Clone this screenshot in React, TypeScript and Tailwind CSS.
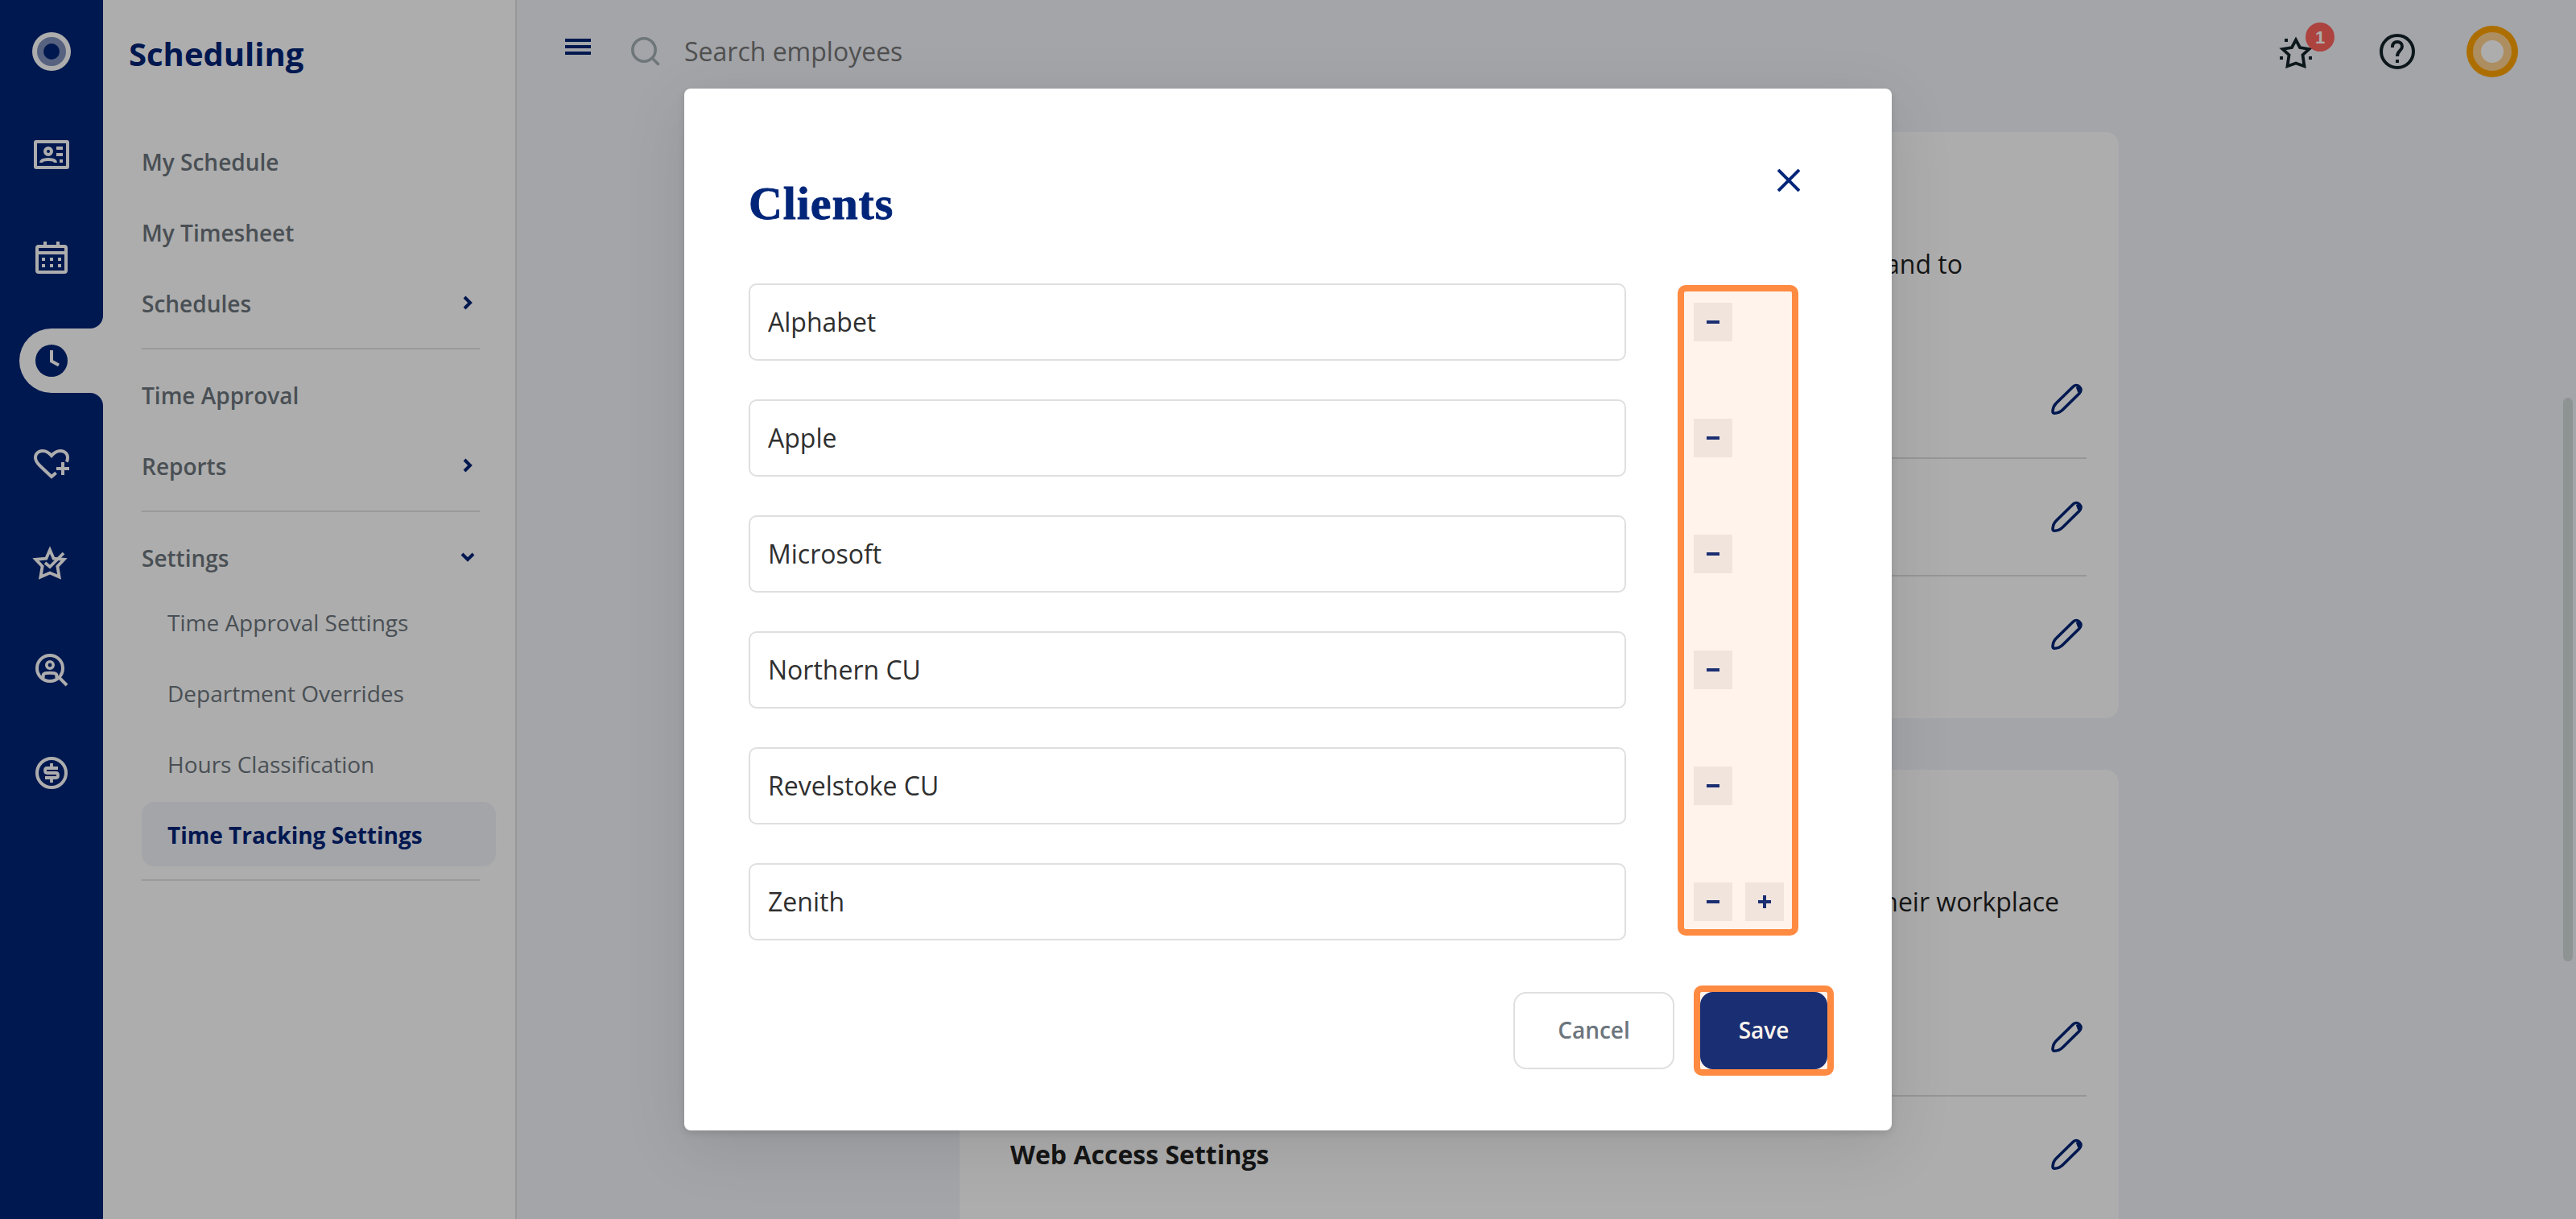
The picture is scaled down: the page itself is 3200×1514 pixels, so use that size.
import React from "react";

type IconProps = { children: React.ReactNode; className?: string };

const Icon = ({ children, className = "" }: IconProps) => (
  <svg viewBox="0 0 24 24" fill="none" stroke="currentColor" strokeWidth="2" className={`block h-12 w-12 shrink-0 ${className}`}>
    {children}
  </svg>
);

const IdCard = () => (
  <Icon>
    <rect x="2" y="4" width="20" height="16" rx="0.5" />
    <circle cx="10" cy="10" r="2" />
    <path d="M5.5 17c0-1.500 2-2 4.500-2s4.500 0.500 4.500 2" />
    <path d="M15 8h4M15 12h4M17 16h2" />
  </Icon>
);

const Calendar = () => (
  <Icon>
    <rect x="3" y="5" width="18" height="16" rx="1" />
    <path d="M3 9h18M8 2v3M16 2v3M6 13h2M11 13h2M16 13h2M6 17h2M11 17h2M16 17h2" />
  </Icon>
);

const Clock = () => (
  <Icon className="text-[#002477]">
    <circle cx="12" cy="12" r="10" fill="currentColor" stroke="none" />
    <path d="M12 5.500v6.800l4.500 2.400" stroke="#fff" />
  </Icon>
);

const HeartPlus = () => (
  <Icon>
    <path d="M14.800 17.600 12 20 5.200 13.600C3 11.500 2 10.200 2 8.200 2 5.800 3.800 4 6.500 4c2.200 0 3.800 1 5.500 3 1.700-2 3.300-3 5.500-3C20.200 4 22 5.800 22 8.200c0 1-.2 1.800-.6 2.600" />
    <path d="M19 11v8M15 15h8" />
  </Icon>
);

const StarCheck = () => (
  <Icon className="-ml-[2px]">
    <path d="M11.500 3.500 13.800 8.800 20.300 9.400 16.200 13.700 17.300 20.300 11.500 17.800 5.700 20.300 6.800 13.700 2.700 9.400 9.200 8.800Z" strokeWidth="1.900" />
    <path d="M8.500 11.500l3 2.500 8.500-8.500" strokeWidth="1.900" />
  </Icon>
);

const UserSearch = () => (
  <Icon>
    <circle cx="11" cy="11" r="8" />
    <circle cx="11" cy="9" r="2.100" strokeWidth="1.800" />
    <path d="M6.800 17v-1.500C7 14 8.800 13.900 11 13.900s4 .1 4.200 1.600V17M16.700 16.700 21.500 21.500" />
  </Icon>
);

const Dollar = () => (
  <Icon>
    <circle cx="12" cy="12" r="9" />
    <path d="M16 9H9.200C8.400 9 8 9.400 8 10.500S8.400 12 9.200 12h5.600c.8 0 1.200.4 1.200 1.500s-.4 1.500-1.200 1.500H8M12 6v3M12 15v3" strokeWidth="1.900" />
  </Icon>
);

const Pencil = () => (
  <svg viewBox="0 0 48 48" fill="none" stroke="#002477" strokeWidth="3.600" strokeLinejoin="round" className="block h-12 w-12">
    <path d="M31 8.500c2.300-2.600 5.600-2.600 8.100-.2s2.500 5.700 0 8.200L18.500 36.800c-3 2.900-6.500 4.400-10.200 4.400-1.800 0-2.400-.8-2.300-2.500.2-3.800 1.500-7.200 4.300-10Z" />
    <path d="M36.500 8.500l2.500 6.500" />
  </svg>
);

const Chevron = ({ down = false }: { down?: boolean }) => (
  <svg viewBox="0 0 24 24" fill="none" stroke="#002477" strokeWidth="4" className={down ? "block h-6 w-6 rotate-90" : "block h-6 w-6"}>
    <path d="M8 5l7 7-7 7" />
  </svg>
);

const railIcons = [IdCard, Calendar];
const railLower = [HeartPlus, StarCheck, UserSearch, Dollar];
const railLowerTops = ["mt-[64px]", "mt-[76px]", "mt-[84px]", "mt-[80px]"];

const Rail = () => (
  <nav className="flex h-full w-32 shrink-0 flex-col items-center bg-[#002477] pt-10 text-white">
    <div className="flex h-12 w-12 items-center justify-center rounded-full bg-white">
      <div className="h-9 w-9 rounded-full border-8 border-[#7f91bb] bg-[#002477]" />
    </div>
    {railIcons.map((I, i) => (
      <div key={i} className="mt-20">
        <I />
      </div>
    ))}
    <div className="mt-12 flex w-full flex-col">
      <div className="h-4 w-4 self-end bg-white">
        <div className="h-4 w-4 rounded-br-[16px] bg-[#002477]" />
      </div>
      <div className="ml-6 flex h-20 items-center rounded-l-full bg-white pl-4">
        <Clock />
      </div>
      <div className="h-4 w-4 self-end bg-white">
        <div className="h-4 w-4 rounded-tr-[16px] bg-[#002477]" />
      </div>
    </div>
    <div className="-mt-4 flex flex-col items-center">
      {railLower.map((I, i) => (
        <div key={i} className={railLowerTops[i]}>
          <I />
        </div>
      ))}
    </div>
  </nav>
);

const MenuItem = ({ label, arrow }: { label: string; arrow?: "right" | "down" }) => (
  <div className="flex h-20 w-[420px] items-center justify-between pr-[3px]">
    <span className="pt-[2px] text-[28px] font-semibold text-[#6c757d]">{label}</span>
    {arrow && <Chevron down={arrow === "down"} />}
  </div>
);

const Rule = () => <div className="my-4 h-[2px] w-[420px] bg-[#e3e3e3]" />;

const SubItem = ({ label, active = false }: { label: string; active?: boolean }) => (
  <div
    className={
      active
        ? "flex h-20 items-center rounded-2xl bg-[#f1f3f9] pt-[2px] pl-8 text-[28px] font-bold text-[#002477]"
        : "flex h-20 items-center pt-[2px] pl-8 text-[28px] text-[#6c757d]"
    }
  >
    {label}
  </div>
);

const SideMenu = () => (
  <aside className="h-full w-[514px] shrink-0 border-r-2 border-[#e0e0e0] bg-white pr-6 pl-12">
    <h1 className="-ml-4 flex h-[134px] items-center text-[40px] font-bold text-[#002477]">Scheduling</h1>
    <div className="mt-[26px] flex flex-col gap-2">
      <MenuItem label="My Schedule" />
      <MenuItem label="My Timesheet" />
      <MenuItem label="Schedules" arrow="right" />
    </div>
    <Rule />
    <div className="flex flex-col gap-2">
      <MenuItem label="Time Approval" />
      <MenuItem label="Reports" arrow="right" />
    </div>
    <Rule />
    <MenuItem label="Settings" arrow="down" />
    <div className="flex flex-col gap-2">
      <SubItem label="Time Approval Settings" />
      <SubItem label="Department Overrides" />
      <SubItem label="Hours Classification" />
      <SubItem label="Time Tracking Settings" active />
    </div>
    <Rule />
  </aside>
);

const TopBar = () => (
  <header className="flex h-32 items-center pr-[72px] pl-[60px]">
    <div className="-mt-3 flex flex-col gap-1">
      <div className="h-1 w-8 bg-[#002477]" />
      <div className="h-1 w-8 bg-[#002477]" />
      <div className="h-1 w-8 bg-[#002477]" />
    </div>
    <svg viewBox="0 0 36 36" fill="none" stroke="#a3afb4" strokeWidth="3.600" className="ml-[50px] block h-9 w-9">
      <circle cx="16" cy="16" r="14.200" />
      <path d="M25 25l9.500 9.500" />
    </svg>
    <span className="ml-[30px] text-[32px] text-[#777777]">Search employees</span>
    <div className="relative ml-auto">
      <svg viewBox="0 0 48 48" fill="none" stroke="#13222a" strokeWidth="3.800" className="block h-12 w-12">
        <path d="M24 9.500l5 9.500 11.500 2-8 7.200 2 14L24 38.500l-10.500 3.700 2-14-8-7.200L19 19Z" />
        <path d="M10 10h4M4 32h4M40 32h4" strokeWidth="4" />
      </svg>
      <div className="absolute top-[-12px] left-9 flex h-9 w-9 items-center justify-center rounded-full bg-[#ff645d] font-['Liberation_Sans',sans-serif] text-[22px] font-bold text-white">
        1
      </div>
    </div>
    <svg viewBox="0 0 48 48" fill="none" stroke="#13222a" strokeWidth="4" className="ml-[78px] block h-12 w-12">
      <circle cx="24" cy="24" r="20" />
      <path d="M18 19v-1c0-4 2.500-6 6-6s6 2.200 6 5.500c0 5.500-6 5.500-6 12.500M24 34v4" />
    </svg>
    <div className="ml-[62px] flex h-16 w-16 items-center justify-center rounded-full bg-[#ffa300]">
      <div className="h-12 w-12 rounded-full border-[10px] border-[#ffd28f] bg-white" />
    </div>
  </header>
);

const EditRow = ({ label = "", last = false }: { label?: string; last?: boolean }) => (
  <div
    className={
      last
        ? "flex h-36 items-center justify-between pl-[23px]"
        : "flex h-[146px] items-center justify-between border-b-2 border-[#dddddd] pl-[23px]"
    }
  >
    <span className="text-[32px] font-bold text-[#1f1f1f]">{label}</span>
    <Pencil />
  </div>
);

const MainArea = () => (
  <main className="h-full flex-1 overflow-hidden bg-[#f1f3f9]">
    <TopBar />
    <div className="mt-9 ml-[550px] flex w-[1440px] flex-col gap-16">
      <section className="h-[728px] rounded-2xl bg-white px-10 pt-[260px]">
        <p className="-mt-[120px] flex h-[120px] justify-end pr-[154px] text-[32px] leading-[48px] text-[#1f1f1f]">and to</p>
        <EditRow />
        <EditRow />
        <EditRow last />
      </section>
      <section className="h-[728px] rounded-2xl bg-white px-10 pt-[260px]">
        <p className="-mt-[120px] flex h-[120px] justify-end pr-[34px] text-[32px] leading-[48px] text-[#1f1f1f]">their workplace</p>
        <EditRow />
        <EditRow label="Web Access Settings" last />
      </section>
    </div>
  </main>
);

const SquareButton = ({ plus = false }: { plus?: boolean }) => (
  <button className="flex h-12 w-12 items-center justify-center bg-[#efefef]">
    <svg viewBox="0 0 16 16" stroke="#002477" strokeWidth="4" className="block h-4 w-4 overflow-visible">
      <path d={plus ? "M0 8h16M8 0v16" : "M0 8h16"} />
    </svg>
  </button>
);

const clients = ["Alphabet", "Apple", "Microsoft", "Northern CU", "Revelstoke CU", "Zenith"];

const ClientsDialog = () => (
  <div className="relative h-[1294px] w-[1500px] rounded-lg bg-white px-20 pt-[82px] shadow-[0_20px_80px_rgba(0,0,0,0.1),0_4px_8px_rgba(0,0,0,0.1)]">
    <div className="flex h-40 items-start justify-between pr-[34px]">
      <h2 className="mt-[25px] font-['Liberation_Serif',serif] text-[58px] leading-[72px] font-bold tracking-[0.9px] text-[#002579] [-webkit-text-stroke:0.8px_#002579]">
        Clients
      </h2>
      <svg viewBox="0 0 28 28" stroke="#002579" strokeWidth="4" className="mt-[18px] block h-7 w-7">
        <path d="M1 1l26 26M27 1L1 27" />
      </svg>
    </div>
    <div className="flex flex-col gap-12">
      {clients.map((name, i) => (
        <div key={name} className="flex items-center">
          <div className="flex h-24 w-[1090px] items-center rounded-[10px] border-2 border-[#dfdfdf] pl-[22px] text-[32px] text-[#2f2f2f]">
            {name}
          </div>
          <div className="ml-[84px] flex gap-4">
            <SquareButton />
            {i === clients.length - 1 && <SquareButton plus />}
          </div>
        </div>
      ))}
    </div>
    <div className="mt-16 flex justify-end gap-8">
      <button className="h-24 w-[200px] rounded-2xl border-2 border-[#dfdfdf] pb-[2px] text-[28px] font-semibold text-[#6c757d]">Cancel</button>
      <button className="h-24 w-[158px] rounded-2xl bg-[#002579] pb-[2px] text-[28px] font-semibold text-white">Save</button>
    </div>
    <div className="absolute top-[244px] left-[1234px] h-[808px] w-[150px] rounded-[10px] border-8 border-[#ff8a41] bg-[#ff8a41]/10 bg-clip-padding" />
    <div className="absolute top-[1114px] left-[1254px] h-[112px] w-[174px] rounded-[10px] border-8 border-[#ff8a41] bg-[#ff8a41]/10 bg-clip-padding" />
  </div>
);

export default function App() {
  return (
    <div className="relative flex h-[1514px] w-[3200px] overflow-hidden font-['Open_Sans',sans-serif]">
      <Rail />
      <SideMenu />
      <MainArea />
      <div className="absolute top-[494px] right-1 h-[700px] w-3 rounded-full bg-[#d2d9db]" />
      <div className="absolute inset-0 flex items-start justify-center bg-black/32 pt-[110px]">
        <ClientsDialog />
      </div>
    </div>
  );
}
